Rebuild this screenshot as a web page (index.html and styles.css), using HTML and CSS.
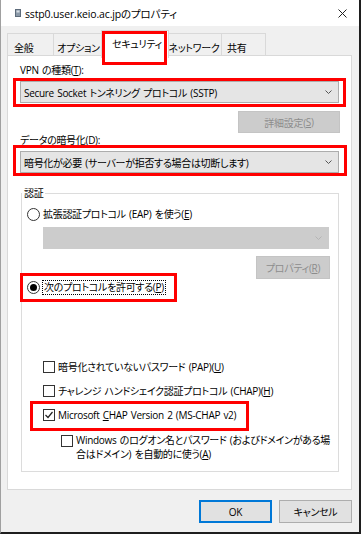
FILE: index.html
```html
<!DOCTYPE html>
<html lang="ja">
<head>
    <meta charset="UTF-8">
    <meta name="viewport" content="width=device-width, initial-scale=1.0">
    <title>sstp0.user.keio.ac.jpのプロパティ</title>
    <link rel="stylesheet" href="styles.css">
</head>
<body>

    <div class="window">
        <!-- Title bar -->
        <div class="titlebar">
            <svg class="app-icon" width="6" height="8" viewBox="0 0 6 8">
                <rect x="0.5" y="0.5" width="5" height="7" fill="#8b99a8" stroke="#5d6b7a"/>
                <rect x="1.5" y="1.5" width="3" height="2" fill="#d6dde4"/>
            </svg>
            <span class="title">sstp0.user.keio.ac.jpのプロパティ</span>
            <svg class="close" width="9" height="9" viewBox="0 0 9 9">
                <path d="M0.5 0.5 L8.5 8.5 M8.5 0.5 L0.5 8.5" stroke="#222" stroke-width="1"/>
            </svg>
        </div>

        <div class="dialog">
            <!-- Tabs -->
            <div class="tabs">
                <div class="tab tab-general">全般</div>
                <div class="tab tab-options">オプション</div>
                <div class="tab tab-security active marked">セキュリティ</div>
                <div class="tab tab-network">ネットワーク</div>
                <div class="tab tab-share">共有</div>
            </div>

            <!-- Security page -->
            <div class="panel">
                <div class="label">VPN の種類(<u>T</u>):</div>
                <div class="combo marked mark-vpn">
                    <span>Secure Socket トンネリング プロトコル (SSTP)</span>
                    <svg class="arrow" width="7" height="4" viewBox="0 0 7 4"><polyline points="0.5,0.5 3.5,3.5 6.5,0.5" fill="none" stroke="#555"/></svg>
                </div>
                <div class="btn-row">
                    <div class="btn disabled btn-wide">詳細設定(<u>S</u>)</div>
                </div>

                <div class="label label-enc">データの暗号化(<u>D</u>):</div>
                <div class="combo marked mark-enc">
                    <span>暗号化が必要 (サーバーが拒否する場合は切断します)</span>
                    <svg class="arrow" width="7" height="4" viewBox="0 0 7 4"><polyline points="0.5,0.5 3.5,3.5 6.5,0.5" fill="none" stroke="#555"/></svg>
                </div>

                <fieldset class="group">
                    <legend>認証</legend>

                    <div class="option">
                        <span class="radio"></span>
                        <span>拡張認証プロトコル (EAP) を使う(<u>E</u>)</span>
                    </div>
                    <div class="combo disabled-combo">
                        <span></span>
                        <svg class="arrow" width="7" height="4" viewBox="0 0 7 4"><polyline points="0.5,0.5 3.5,3.5 6.5,0.5" fill="none" stroke="#b4b4b4"/></svg>
                    </div>
                    <div class="btn-row">
                        <div class="btn disabled btn-prop">プロパティ(<u>R</u>)</div>
                    </div>

                    <div class="option option-allow">
                        <span class="option-mark marked mark-allow">
                            <span class="radio checked"></span>
                            <span class="focus">次のプロトコルを許可する(<u>P</u>)</span>
                        </span>
                    </div>

                    <div class="option sub option-pap">
                        <span class="check"></span>
                        <span>暗号化されていないパスワード (PAP)(<u>U</u>)</span>
                    </div>
                    <div class="option sub">
                        <span class="check"></span>
                        <span>チャレンジ ハンドシェイク認証プロトコル (CHAP)(<u>H</u>)</span>
                    </div>
                    <div class="option sub">
                        <span class="option-mark marked mark-ms">
                            <span class="check">
                                <svg width="10" height="10" viewBox="0 0 10 10"><polyline points="1.5,5 4,7.5 8.5,2" fill="none" stroke="#222" stroke-width="1.2"/></svg>
                            </span>
                            <span>Microsoft <u>C</u>HAP Version 2 (MS-CHAP v2)</span>
                        </span>
                    </div>
                    <div class="option subsub">
                        <span class="check"></span>
                        <span>Windows のログオン名とパスワード (およびドメインがある場<br>合はドメイン) を自動的に使う(<u>A</u>)</span>
                    </div>
                </fieldset>
            </div>

            <!-- Dialog buttons -->
            <div class="footer">
                <div class="btn btn-dlg default">OK</div>
                <div class="btn btn-dlg">キャンセル</div>
            </div>
        </div>
    </div>

</body>
</html>
```

FILE: styles.css
```css
/* General */
* {
    box-sizing: border-box;
}

body {
    margin: 0;
    background: #fff;
    font-family: "Open Sans", "Noto Sans CJK JP", sans-serif;
    font-size: 10px;
    letter-spacing: -0.3px;
    word-spacing: 1px;
    color: #000;
}

u {
    text-decoration: underline;
    text-underline-offset: 1px;
}

.window {
    width: 361px;
    height: 534px;
    background: #f0f0f0;
    border-left: 1px solid #a0a0a0;
    border-right: 2px solid #1e1e1e;
    border-bottom: 2px solid #1e1e1e;
    font-feature-settings: "palt";
}

/* Title bar */
.titlebar {
    height: 26px;
    background: #fff;
    display: flex;
    align-items: center;
    padding: 0 12px 0 14px;
}

.app-icon {
    margin-right: 4px;
}

.title {
    font-size: 10.5px;
    letter-spacing: -0.15px;
    color: #000;
}

.close {
    margin-left: auto;
}

.dialog {
    padding: 0 7px 0 6px;
}

/* Tabs */
.tabs {
    display: flex;
    height: 26px;
    margin-top: 4px;
}

.tab {
    position: relative;
    flex-shrink: 0;
    margin-top: 3px;
    height: 24px;
    padding-top: 7px;
    line-height: 14px;
    text-align: center;
    background: #f0f0f0;
    border: 1px solid #d9d9d9;
    border-bottom: none;
    border-right: none;
    white-space: nowrap;
}

.tab-general {
    width: 46px;
    padding-left: 6px;
    text-align: left;
}

.tab-options {
    width: 50px;
}

.tab-security {
    width: 68px;
}

.tab-network {
    width: 54px;
}

.tab-share {
    width: 45px;
    padding-left: 5px;
    text-align: left;
    border-right: 1px solid #d9d9d9;
}

.tab.active {
    margin: 0 -2px;
    height: 28px;
    padding-top: 6px;
    padding-left: 4px;
    background: #fff;
    border-right: 1px solid #d9d9d9;
    z-index: 2;
}

.tab.active + .tab {
    border-left: none;
}

/* red annotation boxes */
.marked {
    position: relative;
}

.marked::after {
    content: "";
    position: absolute;
    border: 3px solid #f00;
    pointer-events: none;
}

.tab.marked::after {
    top: 0;
    bottom: -7px;
    left: 0;
    right: 1px;
}

.mark-vpn::after {
    top: -4px;
    bottom: -5px;
    left: -8px;
    right: -8px;
}

.mark-enc::after {
    top: -7px;
    bottom: -4px;
    left: -8px;
    right: -9px;
}

.mark-allow::after {
    top: -8px;
    bottom: -8px;
    left: -7px;
    right: -12px;
}

.mark-ms::after {
    top: -7px;
    bottom: -9px;
    left: -13px;
    right: -13px;
}

/* Page panel */
.panel {
    height: 435px;
    margin-top: -1px;
    background: #fff;
    border: 1px solid #d9d9d9;
    padding: 0 12px;
    position: relative;
    z-index: 1;
}

.label {
    height: 14px;
    line-height: 14px;
    margin-top: 7px;
}

.label-enc {
    margin-top: 0;
}

.combo {
    height: 22px;
    margin-top: 4px;
    display: flex;
    align-items: center;
    justify-content: space-between;
    padding: 0 6px 0 3px;
    background: #e5e5e5;
    border: 1px solid #adadad;
    white-space: nowrap;
}

.btn-row {
    display: flex;
    justify-content: flex-end;
}

.btn {
    display: flex;
    align-items: center;
    justify-content: center;
    height: 22px;
    background: #e1e1e1;
    border: 1px solid #adadad;
}

.btn.disabled {
    background: #cccccc;
    border-color: #c4c4c4;
    color: #8c8c8c;
}

.btn-wide {
    width: 102px;
    margin-top: 8px;
    margin-right: -1px;
}

/* Authentication group */
.group {
    min-width: 0;
    margin: 13px 0 0 1px;
    padding: 7px 8px 10px 5px;
    border: 1px solid #dcdcdc;
}

.group legend {
    padding: 0 2px;
    margin-left: -5px;
    line-height: 14px;
}

.option {
    display: flex;
    align-items: center;
    height: 14px;
    line-height: 14px;
    white-space: nowrap;
}

.option-mark {
    display: flex;
    align-items: center;
}

.radio {
    width: 13px;
    height: 13px;
    border: 1px solid #333;
    border-radius: 50%;
    background: #fff;
    margin-right: 3px;
    display: flex;
    align-items: center;
    justify-content: center;
}

.radio.checked::before {
    content: "";
    width: 7px;
    height: 7px;
    border-radius: 50%;
    background: #000;
}

.focus {
    outline: 1px dotted #000;
    outline-offset: 0;
    padding: 0 1px;
    line-height: 13px;
}

.disabled-combo {
    margin: 6px 1px 0 16px;
    background: #cccccc;
    border-color: #cccccc;
}

.btn-prop {
    width: 74px;
    height: 23px;
    margin-top: 7px;
}

.option-allow {
    margin-top: 1px;
}

.check {
    width: 12px;
    height: 12px;
    border: 1px solid #333;
    background: #fff;
    margin-right: 3px;
    display: flex;
    align-items: center;
    justify-content: center;
    flex-shrink: 0;
}

.option.sub {
    margin-top: 10px;
    padding-left: 16px;
}

.option.option-pap {
    margin-top: 66px;
}

.option.subsub {
    margin-top: 11px;
    padding-left: 34px;
    height: 28px;
    align-items: flex-start;
}

.option.subsub .check {
    margin-top: 2px;
}

/* Footer buttons */
.footer {
    display: flex;
    justify-content: flex-end;
    gap: 7px;
    margin-top: 10px;
}

.btn-dlg {
    width: 73px;
    height: 23px;
}

.btn-dlg.default {
    border: 2px solid #0078d7;
}
```
